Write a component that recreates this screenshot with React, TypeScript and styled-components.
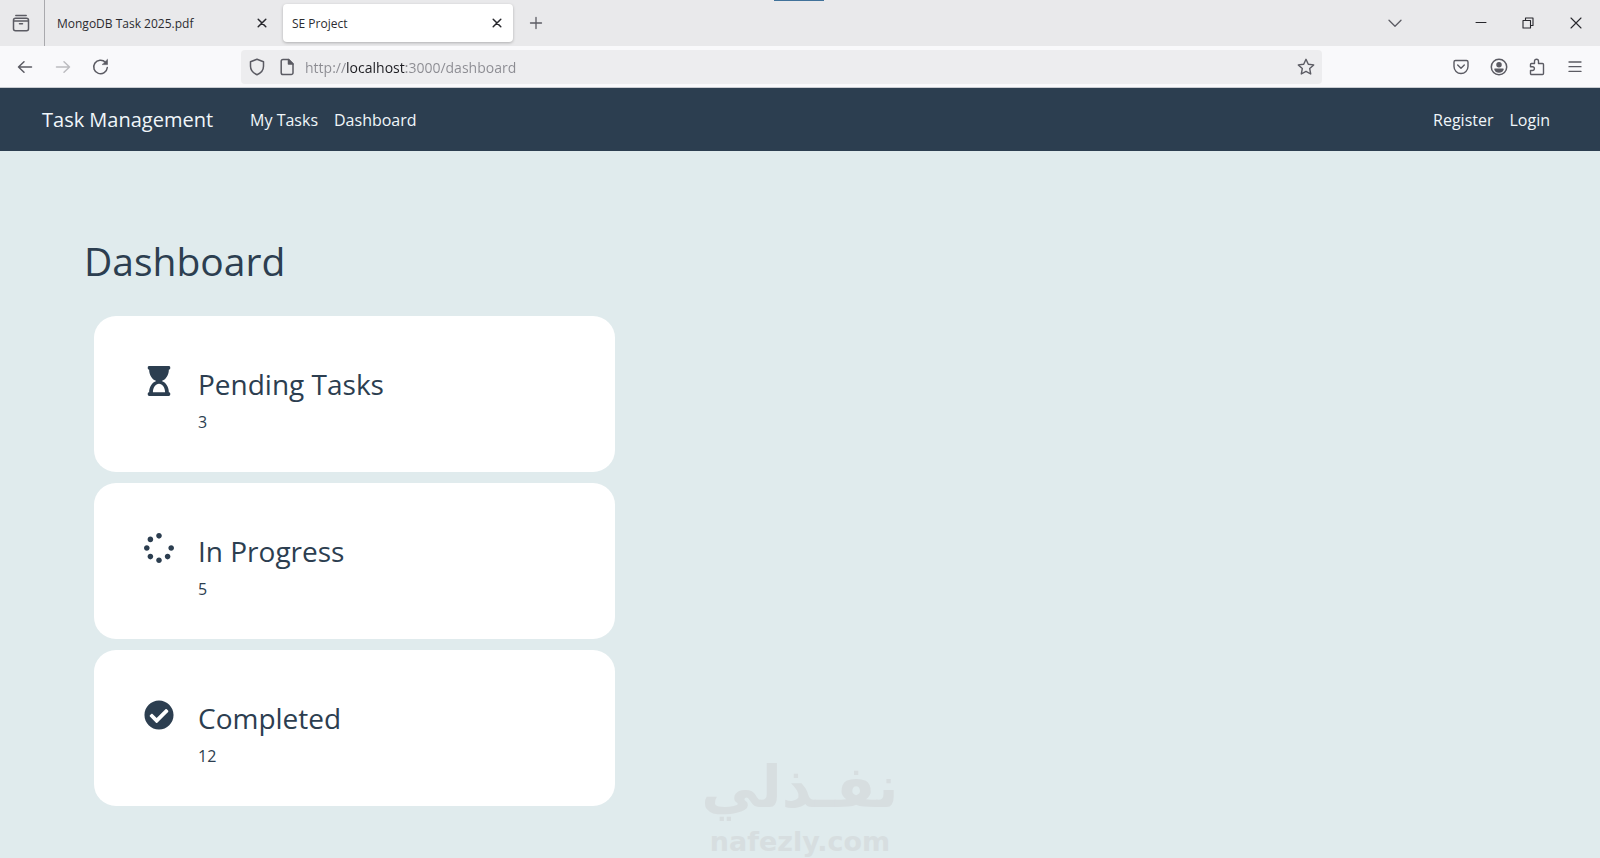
import React from "react";
import styled, { createGlobalStyle } from "styled-components";
import { FaCheckCircle, FaHourglassStart, FaSpinner } from "react-icons/fa";

const GlobalStyle = createGlobalStyle`
  *, *::before, *::after { box-sizing: border-box; }
  body {
    margin: 0;
    background: #e0ebed;
    color: #2c3e50;
    font-family: "Open Sans", "Noto Sans", sans-serif;
    font-size: 16px;
    line-height: 24px;
  }
  h1, h2, p { margin: 0; font-weight: 400; }
  button { border: 0; padding: 0; background: none; color: inherit; font: inherit; }
  svg { display: block; flex: none; }
`;

const Page = styled.div`
  position: relative;
  display: flex;
  flex-direction: column;
  min-height: 100vh;
  overflow: hidden;
`;

const TabStrip = styled.div`
  display: flex;
  align-items: center;
  height: 46px;
  background: #e9e9eb;
  color: #55555c;
`;

const LoadingMark = styled.div`
  position: absolute;
  top: 0;
  left: 50%;
  width: 50px;
  height: 1px;
  margin-left: -26px;
  background: #41729a;
`;

const ViewCell = styled.div`
  display: flex;
  align-self: stretch;
  align-items: center;
  width: 45px;
  padding-left: 9px;
  border-right: 1px solid #a9a9ad;
`;

const IconButton = styled.button<{ $width?: number; $faded?: boolean; $dark?: boolean }>`
  display: flex;
  align-items: center;
  justify-content: center;
  flex: none;
  width: ${(p) => p.$width ?? 24}px;
  height: 32px;
  color: ${(p) => (p.$faded ? "#bcbcc0" : p.$dark ? "#27272c" : "#5b5b63")};
`;

const Tab = styled.div<{ $active?: boolean }>`
  display: flex;
  align-items: center;
  justify-content: space-between;
  width: 230px;
  height: 38px;
  margin-left: ${(p) => (p.$active ? 5 : 3)}px;
  padding: 0 4px 0 9px;
  border-radius: 4px;
  background: ${(p) => (p.$active ? "#ffffff" : "transparent")};
  box-shadow: ${(p) => (p.$active ? "0 1px 3px rgba(0, 0, 0, 0.25)" : "none")};
`;

const TabTitle = styled.button`
  padding-top: 2px;
  color: #2c2c31;
  font-size: 12px;
  line-height: 20px;
`;

const Spacer = styled.div`
  flex: 1;
`;

const WindowControls = styled.div`
  display: flex;
  margin-left: 42px;
`;

const Toolbar = styled.div`
  display: flex;
  align-items: center;
  height: 42px;
  padding: 0 13px;
  background: #f9f9fb;
  border-bottom: 1px solid #c9ccd1;
`;

const NavGroup = styled.div`
  display: flex;
  gap: 14px;
  width: 228px;
`;

const AddressBar = styled.div`
  display: flex;
  align-items: center;
  flex: 1;
  gap: 6px;
  height: 34px;
  padding: 0 4px;
  border-radius: 4px;
  background: #ededef;
`;

const AddressInput = styled.input`
  flex: 1;
  min-width: 0;
  height: 30px;
  padding: 2px 0 0;
  border: 0;
  outline: 0;
  font: 14px/20px "Open Sans", "Noto Sans", sans-serif;
  color: transparent;
  background: linear-gradient(90deg, #8b8b91 41px, #1c1c21 41px, #1c1c21 101px, #8b8b91 101px);
  background-clip: text;
  -webkit-background-clip: text;
`;

const ToolGroup = styled.div`
  display: flex;
  gap: 14px;
  padding-left: 127px;
`;

const Navbar = styled.nav`
  display: flex;
  align-items: center;
  gap: 16px;
  height: 63px;
  padding: 0 50px 0 42px;
  background: #2c3e50;
`;

const Brand = styled.a`
  margin-right: 21px;
  color: #f0f6fa;
  font-size: 20px;
  line-height: 28px;
  text-decoration: none;
`;

const NavLink = styled.a`
  color: #f0f6fa;
  text-decoration: none;
`;

const Main = styled.main`
  flex: 1;
  padding: 80px 84px 53px;
`;

const Heading = styled.h1`
  font-size: 39px;
  line-height: 60px;
`;

const CardList = styled.div`
  display: flex;
  flex-direction: column;
  gap: 11px;
  max-width: 531px;
  padding: 25px 0 0 10px;
`;

const Card = styled.section`
  display: flex;
  gap: 24px;
  padding: 50px;
  min-height: 156px;
  border-radius: 22px;
  background: #ffffff;
`;

const CardIcon = styled.div`
  display: flex;
  justify-content: center;
  width: 30px;
`;

const CardTitle = styled.h2`
  font-size: 28px;
  line-height: 36px;
`;

const CardCount = styled.p`
  padding-top: 8px;
  line-height: 24px;
`;

const CardText = styled.div`
  height: 56px;
`;

const Watermark = styled.div`
  position: absolute;
  bottom: 0;
  left: 50%;
  width: 200px;
  margin-left: -100px;
  text-align: center;
  color: #d7dee0;
  pointer-events: none;
`;

const WatermarkName = styled.div`
  font: bold 58px/76px "DejaVu Sans", sans-serif;
`;

const WatermarkSite = styled.div`
  font: bold 27px/34px "DejaVu Sans", sans-serif;
`;

function Glyph({ size = 18, children, width = 1.5 }: { size?: number; width?: number; children: React.ReactNode }) {
  return (
    <svg width={size} height={size} viewBox="0 0 18 18" fill="none" stroke="currentColor" strokeWidth={width} strokeLinecap="round" strokeLinejoin="round" aria-hidden="true">
      {children}
    </svg>
  );
}

const CloseGlyph = () => (
  <Glyph>
    <path d="M5.200 5.200l7.600 7.600M12.800 5.200l-7.600 7.600" />
  </Glyph>
);

const cards = [
  { title: "Pending Tasks", count: 3, Icon: FaHourglassStart },
  { title: "In Progress", count: 5, Icon: FaSpinner },
  { title: "Completed", count: 12, Icon: FaCheckCircle },
];

export default function App() {
  return (
    <Page>
      <GlobalStyle />
      <LoadingMark />
      <TabStrip>
        <ViewCell>
          <IconButton aria-label="Recent browsing">
            <Glyph>
              <path d="M3.800 1.500h10.400" />
              <rect x="1.500" y="4.200" width="15" height="12.600" rx="2" />
              <path d="M1.700 7h14.600M7.500 9.800h3" />
            </Glyph>
          </IconButton>
        </ViewCell>
        <Tab>
          <TabTitle>MongoDB Task 2025.pdf</TabTitle>
          <IconButton aria-label="Close MongoDB Task 2025.pdf" $dark><CloseGlyph /></IconButton>
        </Tab>
        <Tab $active>
          <TabTitle>SE Project</TabTitle>
          <IconButton aria-label="Close SE Project" $dark><CloseGlyph /></IconButton>
        </Tab>
        <IconButton aria-label="New tab" $width={46}>
          <Glyph width={1.3}><path d="M9 3.500v11M3.500 9h11" /></Glyph>
        </IconButton>
        <Spacer />
        <IconButton aria-label="List all tabs" $width={40}>
          <Glyph width={1.3}><path d="M3 6.300l6 6 6-6" /></Glyph>
        </IconButton>
        <WindowControls>
          <IconButton aria-label="Minimize" $width={47} $dark>
            <Glyph width={1}><path d="M4 8.500h10" /></Glyph>
          </IconButton>
          <IconButton aria-label="Restore" $width={47} $dark>
            <Glyph width={1.100}>
              <rect x="4" y="6.500" width="7.500" height="7.500" />
              <path d="M6.500 6.500V4H14v7.500h-2.500" />
            </Glyph>
          </IconButton>
          <IconButton aria-label="Close window" $width={49} $dark>
            <Glyph width={1.100}><path d="M4 4l10 10M14 4L4 14" /></Glyph>
          </IconButton>
        </WindowControls>
      </TabStrip>

      <Toolbar>
        <NavGroup>
          <IconButton aria-label="Back">
            <Glyph><path d="M15.500 9H2.500M8 3.800L2.500 9 8 14.200" /></Glyph>
          </IconButton>
          <IconButton aria-label="Forward" $faded>
            <Glyph><path d="M2.500 9h13M10 3.800L15.500 9 10 14.200" /></Glyph>
          </IconButton>
          <IconButton aria-label="Reload">
            <Glyph>
              <path d="M15.300 9.500A6.800 6.800 0 1 1 13.500 4.300" />
              <path d="M15.500 1.600v5h-5z" fill="currentColor" strokeWidth="0.6" />
            </Glyph>
          </IconButton>
        </NavGroup>
        <AddressBar>
          <IconButton aria-label="Tracking protection">
            <Glyph><path d="M9 1.200l6.500 2.500v4.600c0 3.800-2.600 6.800-6.500 8.500-3.900-1.700-6.500-4.700-6.500-8.500V3.700z" /></Glyph>
          </IconButton>
          <IconButton aria-label="Site information">
            <Glyph>
              <path d="M5 1.500h5.500L15 6v8.700a1.800 1.800 0 0 1-1.800 1.800H5a1.800 1.800 0 0 1-1.800-1.800V3.300A1.800 1.800 0 0 1 5 1.500z" />
              <path d="M10.500 1.500V6H15z" fill="currentColor" />
            </Glyph>
          </IconButton>
          <AddressInput aria-label="Address" defaultValue="http://localhost:3000/dashboard" spellCheck={false} />
          <IconButton aria-label="Bookmark this page">
            <Glyph width={1.400}><path d="M9 1.300l2.300 4.900 5.400.7-4 3.700 1 5.400L9 13.400 4.300 16l1-5.400-4-3.700 5.400-.7z" /></Glyph>
          </IconButton>
        </AddressBar>
        <ToolGroup>
          <IconButton aria-label="Save to Pocket">
            <Glyph width={1.400}>
              <path d="M3.500 2.500h11A1.500 1.500 0 0 1 16 4v4.500a7 7 0 0 1-14 0V4a1.500 1.500 0 0 1 1.500-1.500z" />
              <path d="M5.700 7l3.300 3.200L12.300 7" />
            </Glyph>
          </IconButton>
          <IconButton aria-label="Account">
            <Glyph>
              <circle cx="9" cy="9" r="7.700" />
              <circle cx="9" cy="6.800" r="2" fill="currentColor" />
              <path d="M5 11.300h8c-.6 1.800-2 2.700-4 2.700s-3.400-.9-4-2.700z" fill="currentColor" />
            </Glyph>
          </IconButton>
          <IconButton aria-label="Extensions">
            <Glyph width={1.400}>
              <path d="M6.500 5.500V3.200a2 2 0 0 1 4 0v2.300h4a1 1 0 0 1 1 1v9a1 1 0 0 1-1 1H3.500a1 1 0 0 1-1-1v-3h2a1.900 1.900 0 0 0 0-3.800h-2V6.500a1 1 0 0 1 1-1z" />
            </Glyph>
          </IconButton>
          <IconButton aria-label="Open application menu">
            <Glyph width={1.300}><path d="M3 4h12M3 8.700h12M3 13.400h12" /></Glyph>
          </IconButton>
        </ToolGroup>
      </Toolbar>

      <Navbar>
        <Brand href="#">Task Management</Brand>
        <NavLink href="#tasks">My Tasks</NavLink>
        <NavLink href="#dashboard">Dashboard</NavLink>
        <Spacer />
        <NavLink href="#register">Register</NavLink>
        <NavLink href="#login">Login</NavLink>
      </Navbar>

      <Main>
        <Heading>Dashboard</Heading>
        <CardList>
          {cards.map(({ title, count, Icon }) => (
            <Card key={title}>
              <CardIcon><Icon size={30} /></CardIcon>
              <CardText>
                <CardTitle>{title}</CardTitle>
                <CardCount>{count}</CardCount>
              </CardText>
            </Card>
          ))}
        </CardList>
      </Main>

      <Watermark>
        <WatermarkName lang="ar" dir="rtl">نفـذلي</WatermarkName>
        <WatermarkSite>nafezly.com</WatermarkSite>
      </Watermark>
    </Page>
  );
}
